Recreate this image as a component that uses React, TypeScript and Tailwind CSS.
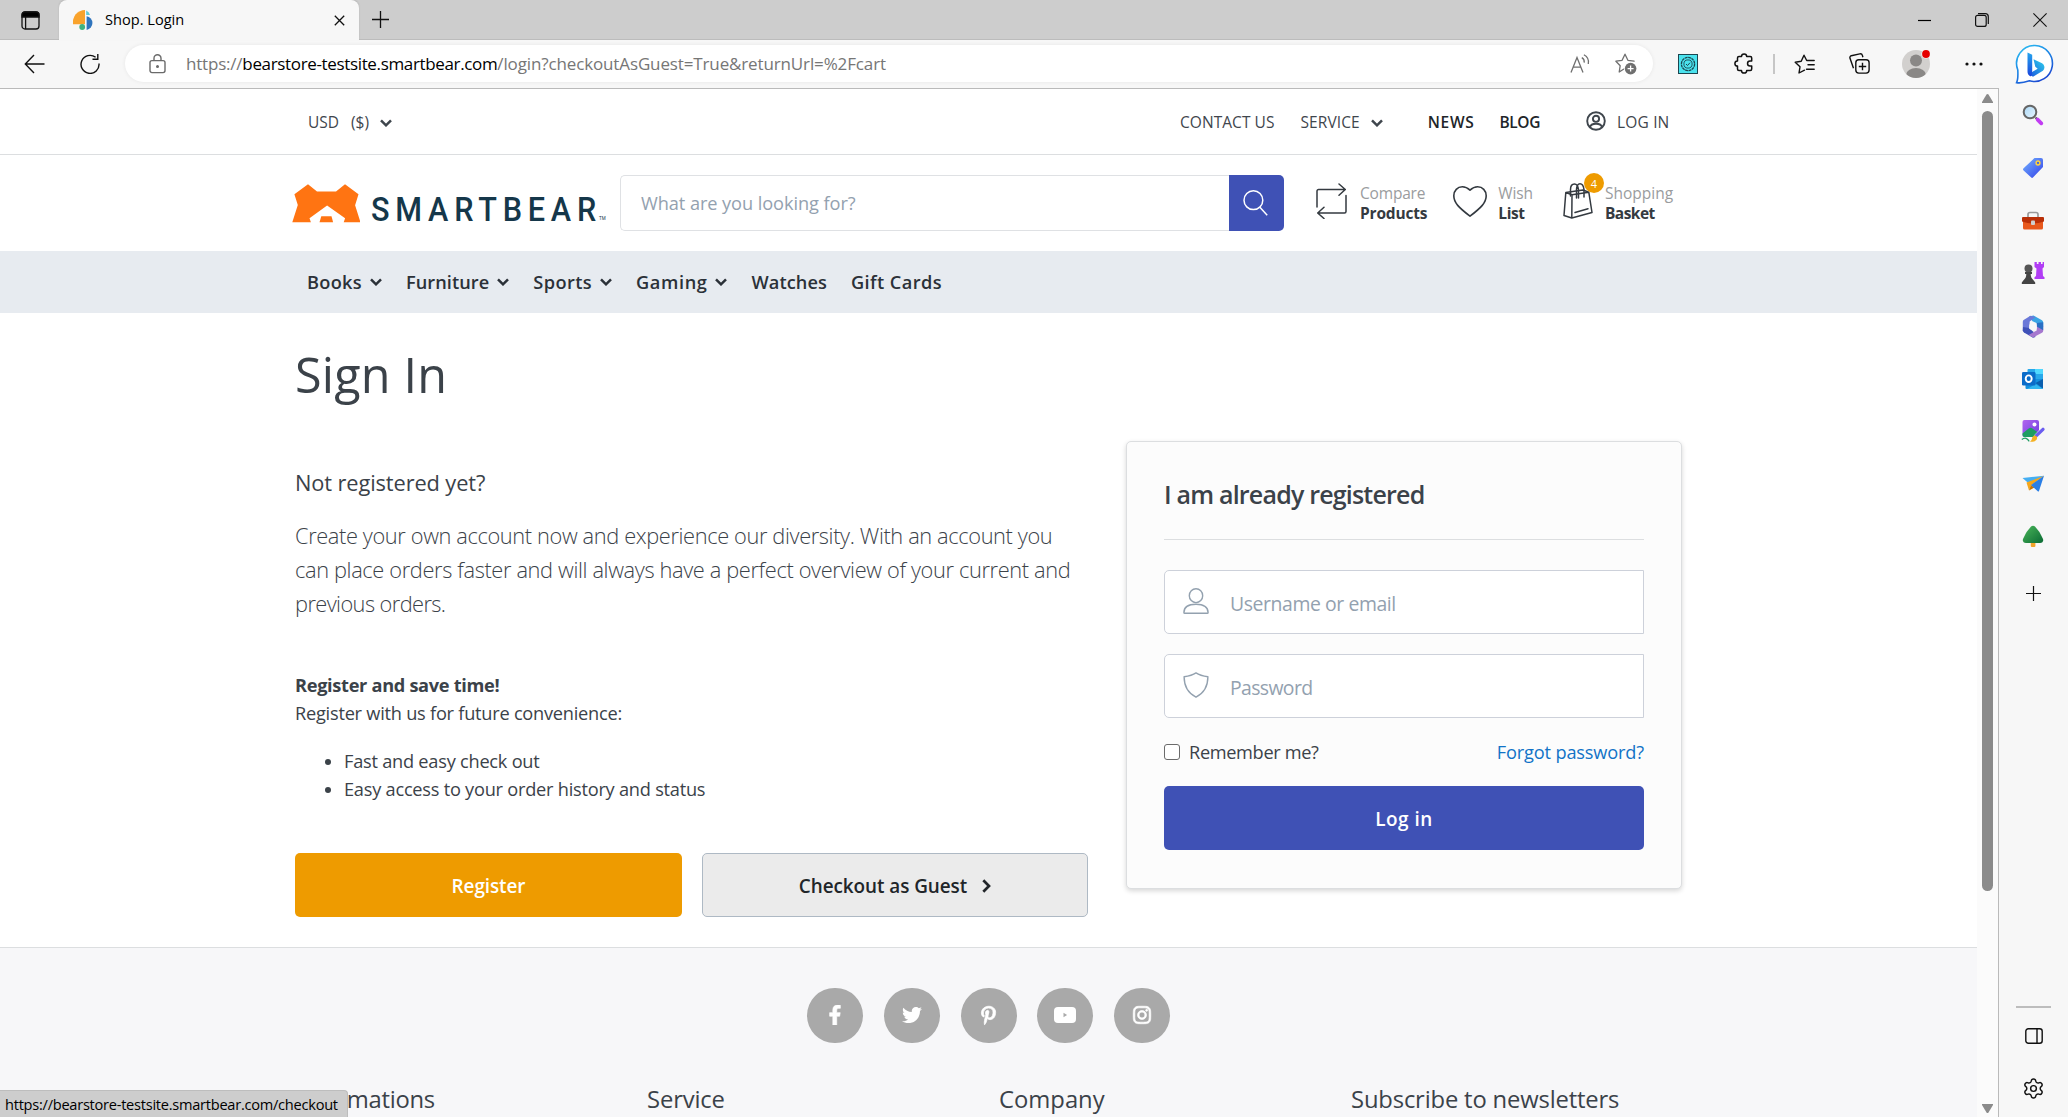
import React from "react";
import type { ReactNode } from "react";
import { FaFacebookF, FaInstagram, FaPinterestP, FaTwitter } from "react-icons/fa";
import { Settings } from "lucide-react";

/* ---------- browser chrome ---------- */

function TitleBar() {
  return (
    <div className="flex h-10 bg-[#cdcdcd] shadow-[inset_0_-1px_0_#bcbcbc]">
      <div className="flex w-[59px] items-center pl-[21px]">
        <svg width="19" height="19" viewBox="0 0 19 19" fill="none" stroke="#111" strokeWidth="1.3">
          <rect x="1" y="1" width="17" height="17" rx="3" />
          <path d="M1 4a3 3 0 0 1 3-3h11a3 3 0 0 1 3 3v2H1z" fill="#000" />
          <path d="M4.6 6v12" />
        </svg>
      </div>
      <div className="flex w-[300px] items-center rounded-t-lg bg-[#f7f7f7] pl-[14px] pr-[14px] shadow-[0_-1px_2px_rgba(0,0,0,0.12)]">
        <svg width="20" height="20" viewBox="0 0 20 20">
          <path d="M12 0v14.2H0A12.3 12.3 0 0 1 12 0z" fill="#f9a32c" />
          <path d="M13.2.6A7 7 0 0 1 17 5h-3.8z" fill="#62c9d6" />
          <path d="M13.6 6.2A7 7 0 0 1 13.6 20z" fill="#2f74bd" />
          <circle cx="9.2" cy="17" r="2.9" fill="#3fb27f" />
        </svg>
        <span className="mb-[2px] ml-3 grow text-[14.6px] leading-none text-black">Shop. Login</span>
        <svg width="11" height="11" viewBox="0 0 11 11" stroke="#111" strokeWidth="1.3">
          <path d="M.8.8l9.4 9.4M10.2.8L.8 10.2" />
        </svg>
      </div>
      <div className="flex grow items-center pb-px pl-[13px]">
        <svg width="17" height="17" viewBox="0 0 17 17" stroke="#111" strokeWidth="1.3">
          <path d="M8.5 0v17M0 8.5h17" />
        </svg>
      </div>
      <div className="flex items-center gap-[44px] pb-px pr-[21px]">
        <svg width="13" height="14" viewBox="0 0 13 14" stroke="#000" strokeWidth="1.2">
          <path d="M0 7.500h13" />
        </svg>
        <svg width="14" height="14" viewBox="0 0 14 14" fill="none" stroke="#111" strokeWidth="1.2">
          <rect x=".6" y="2.4" width="10.6" height="11" rx="2" />
          <path d="M3 .7h7.3a3 3 0 0 1 3 3v7.4" />
        </svg>
        <svg width="14" height="14" viewBox="0 0 14 14" stroke="#111" strokeWidth="1.1">
          <path d="M.4.4l13.2 13.2M13.6.4L.4 13.6" />
        </svg>
      </div>
    </div>
  );
}

function AddressBar() {
  return (
    <div className="ml-6 flex h-[37px] w-[1528px] items-center rounded-full bg-white pl-6 pr-4 shadow-[0_0_4px_rgba(0,0,0,0.07)]">
      <svg width="17" height="20" viewBox="0 0 17 20" fill="none" stroke="#6a6a6a" strokeWidth="1.4">
        <rect x="1" y="6.6" width="15" height="12" rx="2" />
        <path d="M5 6.6V4.3a3.5 3.5 0 0 1 7 0v2.3" />
        <circle cx="8.5" cy="12.5" r=".8" fill="#6a6a6a" />
      </svg>
      <div className="ml-5 grow whitespace-nowrap text-[17px] leading-none text-[#767676]">
        <span className="tracking-[-0.012em]">https://</span>
        <span className="tracking-[-0.0205em] text-black">bearstore-testsite.smartbear.com</span>
        <span className="tracking-[-0.0078em]">/login?checkoutAsGuest=True&amp;returnUrl=%2Fcart</span>
      </div>
      <svg width="21" height="20" viewBox="0 0 21 20" fill="none" stroke="#6f6f6f" strokeWidth="1.3">
        <path d="M1 18.5L7 3.5l6 15M3.2 13.2h7.6" />
        <path d="M11.8 3.6a5 5 0 0 1 2.4 5M13.9.8a8.6 8.6 0 0 1 4.4 9.2" />
      </svg>
      <svg className="ml-6" width="22" height="22" viewBox="0 0 22 22" fill="none" stroke="#6f6f6f" strokeWidth="1.3">
        <path d="M8.5 16.2L4.2 19l1-6.3L.9 8.2l6.2-.9L10 1.2l2.9 6.1 6.2.9" strokeLinejoin="round" strokeLinecap="round" />
        <circle cx="15.6" cy="15.6" r="5.8" fill="#6f6f6f" stroke="none" />
        <path d="M15.6 12.6v6M12.6 15.6h6" stroke="#fff" />
      </svg>
    </div>
  );
}

function Toolbar() {
  return (
    <div className="flex h-12 items-center pb-px pl-6">
      <svg width="21" height="20" viewBox="0 0 21 20" fill="none" stroke="#111" strokeWidth="1.4">
        <path d="M20.500 10H1.500M10 1L1.300 10l8.700 9" />
      </svg>
      <svg className="ml-[34px]" width="22" height="21" viewBox="0 0 22 21" fill="none" stroke="#111" strokeWidth="1.4">
        <path d="M16.600 4.300A9 9 0 1 0 20 10.500M18.800 1v5.300h-5.300" />
      </svg>
      <AddressBar />
      <svg className="ml-[25px]" width="20" height="20" viewBox="0 0 20 20" fill="none" stroke="#1c4650">
        <rect x=".5" y=".5" width="19" height="19" fill="#4be3ee" />
        <circle cx="10" cy="10" r="6.600" strokeWidth="1.300" strokeDasharray="2.900 .55" />
        <circle cx="10" cy="10" r="4.100" strokeWidth=".9" />
        <path d="M8 10l1.500 1.500L12 8.700" />
      </svg>
      <svg className="ml-[36px]" width="19" height="21" viewBox="0 0 19 21" fill="none" stroke="#111" strokeWidth="1.500" strokeLinejoin="round">
        <path d="M7.500 3.500a2.600 2.600 0 0 1 5.200 0h3.500a1.500 1.500 0 0 1 1.500 1.500v3h-1.700a2.400 2.400 0 0 0 0 4.900h1.700V16a1.500 1.500 0 0 1-1.500 1.500h-3.500a2.600 2.600 0 0 1-5.200 0H5A1.500 1.500 0 0 1 3.500 16v-2.900a2.600 2.600 0 0 1 0-5.200V5A1.500 1.500 0 0 1 5 3.500z" />
      </svg>
      <div className="ml-5 h-5 w-[1.500px] bg-[#c6c6c6]" />
      <svg className="ml-[19px]" width="21" height="20" viewBox="0 0 21 20" fill="none" stroke="#111" strokeWidth="1.400" strokeLinejoin="round" strokeLinecap="round">
        <path d="M10.500 16.200L5 19l1-6.200L1.200 8.200l6-.9L10 1.200l2.700 5.300h7.500M14 10.800h6.200M12.500 15.200h7.700" />
      </svg>
      <svg className="ml-[34px]" width="21" height="21" viewBox="0 0 21 21" fill="none" stroke="#111" strokeWidth="1.400">
        <rect x="6.800" y="6.800" width="13.300" height="13.300" rx="3" />
        <path d="M13.500 9.800v7.400M9.800 13.500h7.400" />
        <path d="M4.500 15.300L1 5.300a2 2 0 0 1 1.300-2.600L10.800.9a2.200 2.200 0 0 1 2.600 1.500l.5 1.800" />
      </svg>
      <svg className="ml-8" width="28" height="28" viewBox="0 0 28 28">
        <defs>
          <clipPath id="avatar"><circle cx="14" cy="14" r="14" /></clipPath>
        </defs>
        <g clipPath="url(#avatar)">
          <rect width="28" height="28" fill="#d2d0ce" />
          <circle cx="14" cy="10.500" r="6" fill="#8a8886" />
          <ellipse cx="14" cy="24.500" rx="9.800" ry="6.500" fill="#8a8886" />
        </g>
        <circle cx="24" cy="4" r="4.600" fill="#f7f7f7" />
        <circle cx="24" cy="4" r="3.900" fill="#e60000" />
      </svg>
      <svg className="ml-[35px]" width="18" height="4" viewBox="0 0 18 4" fill="#111">
        <circle cx="2" cy="2" r="1.600" /><circle cx="9" cy="2" r="1.600" /><circle cx="16" cy="2" r="1.600" />
      </svg>
      <svg className="ml-8" width="39" height="40" viewBox="0 0 39 40">
        <defs>
          <linearGradient id="bingRing" x1="0" y1="0" x2=".6" y2="1">
            <stop offset="0" stopColor="#2fc3f2" /><stop offset=".5" stopColor="#1d8ae6" /><stop offset="1" stopColor="#1b49d2" />
          </linearGradient>
          <linearGradient id="bingStem" x1="0" y1="0" x2="0" y2="1">
            <stop offset="0" stopColor="#25a5ee" /><stop offset="1" stopColor="#1a45dc" />
          </linearGradient>
          <linearGradient id="bingBowl" x1="0" y1="1" x2="1" y2="0">
            <stop offset="0" stopColor="#1a52dd" /><stop offset="1" stopColor="#2fd3ec" />
          </linearGradient>
        </defs>
        <path d="M20 1.500a18 18 0 1 1-5.500 35.300C11 38 5 39.300 1.600 38.700 3.200 35.500 3 30 2.800 26A18 18 0 0 1 20 1.500z" fill="#fff" stroke="url(#bingRing)" strokeWidth="1.600" />
        <path d="M18.500 15.300l8.600 3.900a4.800 4.800 0 0 1 .8 7.600L18 32.800l-4.300-2.800 9-5.300-2.400-1.900z" fill="url(#bingBowl)" />
        <path d="M12.500 8.500l4.700 2.200v17c0 4-1 5.300-2.400 4.200-1.700-1-2.300-2.600-2.300-4.700z" fill="url(#bingStem)" />
      </svg>
    </div>
  );
}

function SidebarCell({ children }: { children: ReactNode }) {
  return <div className="flex h-[52.700px] items-center justify-center">{children}</div>;
}

function Sidebar() {
  return (
    <div className="flex w-[69px] flex-col pr-px pt-px">
      <SidebarCell>
        <svg width="22" height="22" viewBox="0 0 22 22">
          <defs><linearGradient id="lens" x1="0" y1="0" x2="1" y2="1"><stop offset="0" stopColor="#a9d6f5" /><stop offset="1" stopColor="#e9f7ff" /></linearGradient></defs>
          <path d="M13.500 13.500l2.500 2.500" stroke="#555" strokeWidth="2" />
          <circle cx="8" cy="8" r="6.300" fill="url(#lens)" stroke="#666" strokeWidth="2" />
          <path d="M15.600 15.600l3.700 3.700" stroke="#c13df2" strokeWidth="3.800" strokeLinecap="round" />
        </svg>
      </SidebarCell>
      <SidebarCell>
        <svg width="22" height="22" viewBox="0 0 22 22">
          <defs><linearGradient id="tag" x1="0" y1="0" x2="1" y2="1"><stop offset="0" stopColor="#74b4ff" /><stop offset="1" stopColor="#3340e8" /></linearGradient></defs>
          <path d="M12.500 1H19a2 2 0 0 1 2 2v7l-9.800 10.300a1.500 1.500 0 0 1-2.200 0L1.600 13.500a1.500 1.500 0 0 1 0-2.200z" fill="url(#tag)" />
          <circle cx="16" cy="6" r="1.900" fill="#3f66e8" stroke="#ffd23d" strokeWidth="1.500" />
        </svg>
      </SidebarCell>
      <SidebarCell>
        <svg width="24" height="20" viewBox="0 0 24 20">
          <path d="M7 6V3.500A2 2 0 0 1 9 1.500h6a2 2 0 0 1 2 2V6" fill="none" stroke="#9a9a9a" strokeWidth="1.700" />
          <rect x="2" y="6" width="20" height="12.500" rx="1.500" fill="#e8581c" />
          <path d="M2 6h20a1 1 0 0 1 1 1v3.500q-11 4-22 0V7a1 1 0 0 1 1-1z" fill="#b92f07" />
          <rect x="10" y="9.500" width="4" height="4.600" rx="1" fill="#cfcfcf" />
        </svg>
      </SidebarCell>
      <SidebarCell>
        <svg width="24" height="24" viewBox="0 0 24 24">
          <path d="M13.500 1h2.300v2h1.700V1h2.500v2h1.600V1H23v5l-1.500 1.500.5 7.500 1.500 1.300V18h-10v-1.700l1.500-1.300.5-7.500L13.500 6z" fill="#b13df5" />
          <circle cx="7.500" cy="7.500" r="4" fill="#555" />
          <path d="M4 11h7v2H9.700c0 3 1 4.500 3 6.500l1.500 2V23H.8v-1.500l1.500-2c2-2 3-3.500 3-6.500H4z" fill="#444" />
        </svg>
      </SidebarCell>
      <SidebarCell>
        <svg width="22" height="23" viewBox="0 0 22 23">
          <path d="M7 1.500L11.500.5 20 5.300q1.200.8 1.200 2v4.500L14.500 8l-4-1.700z" fill="#3aa5e4" />
          <path d="M8.500.8l5 1.300-5.800 4.400L7 15l-3.500 2.500L.8 15.700V6.800q0-1.300 1.200-2z" fill="#6b78d8" />
          <path d="M1 12l6 1 4 3.500 2.500 5.500-2.500.8-9-5.300q-1.200-.8-1.200-2z" fill="#3f51b8" />
          <path d="M21.200 11v4.700q0 1.300-1.200 2L11 22.600 6.500 20l8.200-4.500.3-7z" fill="#a678cf" />
          <path d="M21.200 7.300v8l-6.500-3.700V8z" fill="#2a6fc4" />
          <path d="M11 7.600l3.700 2v4L11 15.700l-3.700-2v-4z" fill="#f7f7f7" />
        </svg>
      </SidebarCell>
      <SidebarCell>
        <svg width="22" height="22" viewBox="0 0 22 22">
          <path d="M6.500 1H20a1 1 0 0 1 1 1v9H5.500V2a1 1 0 0 1 1-1z" fill="#28a8ea" />
          <path d="M13 1h7a1 1 0 0 1 1 1v4h-8z" fill="#50d9ff" />
          <path d="M3.500 11H21v9a1 1 0 0 1-1 1H4.500a1 1 0 0 1-1-1z" fill="#1490df" />
          <path d="M21 11v9.500L13.500 15z" fill="#0a5fae" />
          <path d="M5 21l8.500-5 7.500 5z" fill="#32b6f0" />
          <rect x="0" y="4" width="13.500" height="13.500" rx="1.300" fill="#0b6cc9" />
          <ellipse cx="6.700" cy="10.700" rx="3" ry="3.300" fill="none" stroke="#fff" strokeWidth="1.900" />
        </svg>
      </SidebarCell>
      <SidebarCell>
        <svg width="24" height="24" viewBox="0 0 24 24">
          <defs><linearGradient id="pic" x1="0" y1="0" x2="1" y2="1"><stop offset="0" stopColor="#b266ee" /><stop offset="1" stopColor="#6c3fe0" /></linearGradient></defs>
          <rect x="1.500" y="1" width="16.500" height="17" rx="2" fill="url(#pic)" />
          <path d="M1.500 14.500L8 9.200q1.500-1 3 0l7 5V16a2 2 0 0 1-2 2H3.500a2 2 0 0 1-2-2z" fill="#1f9d61" />
          <circle cx="13.500" cy="5.500" r="2" fill="#fff" />
          <path d="M23 9.500L15 18" stroke="#f7f7f7" strokeWidth="5" />
          <path d="M22 10.300L15.500 16.500" stroke="#6b5df0" strokeWidth="3.200" strokeLinecap="round" />
          <path d="M11.500 18q2-2.500 4-.8 1.500 2-.5 4-2 2-6 1.500 2-1.500 2.500-4.700z" fill="#f5b121" />
          <path d="M.8 20.500q3-2.300 5-.8T8 22.300" fill="none" stroke="#1f9d61" strokeWidth="1.400" />
        </svg>
      </SidebarCell>
      <SidebarCell>
        <svg width="23" height="18" viewBox="0 0 23 18">
          <path d="M.5 3L22 .8 8 9.500z" fill="#45aef2" />
          <path d="M22 .8L4.500 7.500 7 15.500l2-5z" fill="#f6a71c" />
          <path d="M7 15.500l2-5.500 3.500 2.500z" fill="#c87400" />
          <path d="M22 .8L9 10l7 6.500q.8.300 1-.5z" fill="#2a7fe6" />
        </svg>
      </SidebarCell>
      <SidebarCell>
        <svg width="22" height="23" viewBox="0 0 22 23">
          <defs><linearGradient id="tree" x1="0" y1="0" x2="1" y2="1"><stop offset="0" stopColor="#4bb75a" /><stop offset="1" stopColor="#0b6b34" /></linearGradient></defs>
          <rect x="8.800" y="17" width="4.600" height="5" rx="1" fill="#f0a52b" />
          <path d="M9 1.600q2-1.800 4 0Q18 6.500 21 14q.8 3.500-3 4H4q-3.800-.5-3-4Q4 6.500 9 1.600z" fill="url(#tree)" />
        </svg>
      </SidebarCell>
      <div className="flex h-[61px] items-center justify-center">
        <svg width="15" height="15" viewBox="0 0 15 15" stroke="#111" strokeWidth="1.200"><path d="M7.500 0v15M0 7.500h15" /></svg>
      </div>
      <div className="mt-auto flex h-[111px] flex-col items-center">
        <div className="h-[2px] w-[35px] bg-[#bdbdbd]" />
        <svg className="ml-px mt-[20px] shrink-0" width="18" height="16" viewBox="0 0 18 16" fill="none" stroke="#111" strokeWidth="1.400">
          <rect x=".8" y=".8" width="16.400" height="14.400" rx="2.500" />
          <path d="M12 1v14" />
        </svg>
        <Settings className="ml-px mt-[33px] size-[23px] shrink-0 text-[#111]" strokeWidth={1.5} />
      </div>
    </div>
  );
}

function ScrollBar() {
  return (
    <div className="flex w-[21px] flex-col items-center bg-[#fbfbfb] pt-[5px]">
      <svg width="11" height="9" viewBox="0 0 11 9"><path d="M5.500 0q.6 0 1 .6L11 8v1H0V8L4.500.6q.4-.6 1-.6z" fill="#8b8b8b" /></svg>
      <div className="mt-2 h-[780px] w-[11px] rounded-full bg-[#8b8b8b]" />
      <svg className="mb-1 mt-auto" width="11" height="9" viewBox="0 0 11 9"><path d="M5.500 9q-.6 0-1-.6L0 1V0h11v1L6.500 8.400q-.4.600-1 .6z" fill="#8b8b8b" /></svg>
    </div>
  );
}

/* ---------- shop page ---------- */

function Caret({ className }: { className: string }) {
  return (
    <svg className={className} width="12" height="8" viewBox="0 0 12 8" fill="none" stroke="currentColor" strokeWidth="2.5">
      <path d="M1 1.300l5 5 5-5" />
    </svg>
  );
}

function TopMenu() {
  return (
    <div className="flex h-[66px] items-center border-b border-[#dcdee0] pl-[308px] pt-[2px] text-[15.500px] leading-none text-[#3f464d]">
      <span>USD</span>
      <span className="ml-3">($)</span>
      <Caret className="ml-[11px]" />
      <span className="ml-[788px] tracking-[0.003em]">CONTACT US</span>
      <span className="ml-[26px] tracking-[0.006em]">SERVICE</span>
      <Caret className="ml-[11px]" />
      <span className="ml-[45px] font-semibold tracking-[0.044em] text-[#212529]">NEWS</span>
      <span className="ml-[25px] font-semibold tracking-[-0.024em] text-[#212529]">BLOG</span>
      <svg className="-mt-1 ml-[46px]" width="20" height="20" viewBox="0 0 20 20" fill="none" stroke="#3f464d" strokeWidth="1.900">
        <circle cx="10" cy="10" r="8.800" />
        <circle cx="10" cy="7.800" r="3.100" />
        <path d="M4 16.300c.5-2.600 2.300-3.500 6-3.500s5.500.9 6 3.500" />
      </svg>
      <span className="ml-[11px] tracking-[0.010em]">LOG IN</span>
    </div>
  );
}

function Logo() {
  return (
    <div className="flex h-10 w-[315px] items-end">
      <svg width="68" height="40" viewBox="0 0 68 40">
        <path d="M.3 39.200L5.800 22 2.400 11.200 16 1.200 25 8.400h19L53 1.200l13.500 10-3.400 11 5.400 17H51.700l1.400-4-18-12.600-17.600 12.600 1.400 4z" fill="#ff7412" />
        <path d="M29.300 33.300h10.200l1.600 5.900H27.500z" fill="#ff7412" />
      </svg>
      <span className="-mb-[3px] ml-[11px] w-[228px] origin-left scale-x-[0.9] font-['Roboto'] text-[34px] font-medium leading-[34px] tracking-[0.189em] text-[#15374a]">
        SMARTBEAR
      </span>
      <span className="mb-px font-['Roboto'] text-[4.500px] leading-[6px] text-[#15374a]">TM</span>
    </div>
  );
}

function HeaderTool({ icon, top, bottom, className }: { icon: ReactNode; top: ReactNode; bottom: ReactNode; className: string }) {
  return (
    <div className={"flex items-center " + className}>
      {icon}
      <div className="text-[15.500px] leading-[20px]">
        <div className="text-[#9a9c9e]">{top}</div>
        <div className="font-bold text-[#343a40]">{bottom}</div>
      </div>
    </div>
  );
}

function Header() {
  return (
    <div className="flex h-24 items-center pl-[292px]">
      <Logo />
      <div className="ml-[13px] flex h-14 w-[664px]">
        <div className="flex grow items-center rounded-l-[5px] border border-r-0 border-[#dfe1e4] pl-5 text-[18.200px] leading-none tracking-[-0.004em] text-[#93a1af]">
          What are you looking for?
        </div>
        <div className="flex w-[55px] items-center justify-center rounded-r-[5px] bg-[#3f51b5] pr-[3px]">
          <svg width="25" height="26" viewBox="0 0 25 26" fill="none" stroke="#fff" strokeWidth="1.500">
            <circle cx="10.400" cy="10.200" r="9.400" /><path d="M16.900 17.200l7.300 8" />
          </svg>
        </div>
      </div>
      <HeaderTool
        className="ml-8"
        icon={
          <svg className="-mt-1 mr-[13px]" width="31" height="36" viewBox="0 0 31 36" fill="none" stroke="#343a40" strokeWidth="1.500" strokeLinecap="round" strokeLinejoin="round">
            <path d="M1 24V8a1.500 1.500 0 0 1 1.500-1.500H29M23 1l6.300 5.500L23 12.300M30 12.500v16a1.500 1.500 0 0 1-1.500 1.500H2M8 24.300L1.700 30 8 35.500" />
          </svg>
        }
        top={<span className="tracking-[-0.012em]">Compare</span>}
        bottom={<span className="tracking-[-0.012em]">Products</span>}
      />
      <HeaderTool
        className="ml-[26px]"
        icon={
          <svg className="-mt-1 mr-[11px]" width="34" height="31" viewBox="0 0 34 31" fill="none" stroke="#343a40" strokeWidth="1.600" strokeLinejoin="round">
            <path d="M17 4.200C14.500 1.800 12 .8 9.300.8 4.500.8.800 4.600.800 9.800c0 7 5 11.700 16.200 20.400C28.200 21.500 33.200 16.800 33.200 9.800c0-5.200-3.700-9-8.500-9-2.700 0-5.200 1-7.700 3.400z" />
          </svg>
        }
        top={<span className="tracking-[-0.007em]">Wish</span>}
        bottom={<span className="tracking-[-0.025em]">List</span>}
      />
      <HeaderTool
        className="ml-[30px]"
        icon={
          <div className="relative -mt-1 mr-3">
            <svg width="30" height="36" viewBox="0 0 30 36" fill="none" stroke="#343a40" strokeWidth="1.500" strokeLinejoin="round" strokeLinecap="round">
              <path d="M2.800 9.500L20 7l5.800 2.200L29 29.500 8.800 35 1 32.500zM2.800 9.500L9 11.800 8.800 35M9 11.800l16.800-2.600M12 29.500l13-3.700" />
              <path d="M7.500 13V6.500C7.500 3 9 1 11.500 1S15 3 15.500 6.500V15M13.500 15V6.500C13.500 3 15 .8 17 .8S20.500 3 21 6.500V14" />
            </svg>
            <span className="absolute -top-[10px] left-[21px] flex size-5 items-center justify-center rounded-full bg-[#ee9b00] text-[11px] leading-none text-white">4</span>
          </div>
        }
        top="Shopping"
        bottom={<span className="tracking-[-0.034em]">Basket</span>}
      />
    </div>
  );
}

function Nav() {
  return (
    <div className="flex h-[62px] items-center bg-[#e7ebf0] pl-[307px] text-[18.200px] font-semibold leading-none text-[#2b3138]">
      <span className="tracking-[0.016em]">Books</span>
      <Caret className="ml-[8px]" />
      <span className="ml-[24px] tracking-[0.003em]">Furniture</span>
      <Caret className="ml-[8px]" />
      <span className="ml-[24px] tracking-[0.023em]">Sports</span>
      <Caret className="ml-[8px]" />
      <span className="ml-[24px] tracking-[0.033em]">Gaming</span>
      <Caret className="ml-[8px]" />
      <span className="ml-[24px] tracking-[0.005em]">Watches</span>
      <span className="ml-[24px] tracking-[0.023em]">Gift Cards</span>
    </div>
  );
}

function RegisterColumn() {
  return (
    <div className="w-[793px] pt-[27px]">
      <h2 className="text-[21.800px] leading-[30px] tracking-[-0.005em]">Not registered yet?</h2>
      <p className="mt-[21px] whitespace-nowrap text-[21.800px] font-light leading-[34px] tracking-[-0.0172em]">
        Create your own account now and experience our diversity. With an account you
        <br />
        <span className="tracking-[-0.0165em]">can place orders faster and will always have a perfect overview of your current and</span>
        <br />
        <span className="tracking-[-0.027em]">previous orders.</span>
      </p>
      <div className="mt-[50px] text-[18.200px] leading-7 tracking-[-0.013em]">
        <div className="font-bold tracking-[-0.017em]">Register and save time!</div>
        <div>Register with us for future convenience:</div>
        <ul className="mt-5 list-disc pl-[49px]">
          <li>Fast and easy check out</li>
          <li>Easy access to your order history and status</li>
        </ul>
      </div>
      <div className="mt-[50px] flex gap-5 text-[18.900px] font-semibold leading-none">
        <button className="h-16 w-[387px] rounded-[5px] bg-[#ee9b00] pt-[2px] tracking-[-0.004em] text-white">Register</button>
        <button className="flex h-16 w-[386px] items-center justify-center gap-[15px] rounded-[5px] border border-[#aeb9c4] bg-[#ebebeb] pt-[2px] tracking-[-0.003em] text-[#212529]">
          Checkout as Guest
          <svg width="9" height="14" viewBox="0 0 9 14" fill="none" stroke="currentColor" strokeWidth="2.700">
            <path d="M1.300 1.300L7 7l-5.700 5.700" />
          </svg>
        </button>
      </div>
    </div>
  );
}

function LoginCard() {
  return (
    <div className="ml-[38px] h-[448px] w-[556px] rounded-[5px] border border-[#dcdee0] bg-[#fcfcfc] px-[37px] pt-[35px] shadow-[0_2px_5px_rgba(0,0,0,0.16)]">
      <h2 className="text-[25px] font-semibold leading-[34px] tracking-[-0.032em]">I am already registered</h2>
      <div className="mt-7 h-px bg-[#dcdee0]" />
      <div className="mt-[30px] flex h-16 items-center rounded-l-[5px] border border-[#cdd1da] bg-white pl-[18px]">
        <svg className="-mt-[2px] mr-[21px]" width="26" height="26" viewBox="0 0 26 26" fill="none" stroke="#93a1af" strokeWidth="1.400">
          <ellipse cx="13" cy="7.700" rx="6.700" ry="6.900" />
          <path d="M.9 24.500c0-5.500 4.500-8.300 12.100-8.300s12.100 2.800 12.100 8.300q0 .8-.8.800H1.700q-.8 0-.8-.8z" />
        </svg>
        <span className="pt-[3px] text-[19.400px] leading-none tracking-[-0.021em] text-[#93a1af]">Username or email</span>
      </div>
      <div className="mt-5 flex h-16 items-center rounded-l-[5px] border border-[#cdd1da] bg-white pl-[18px]">
        <svg className="-mt-[2px] mr-[21px]" width="26" height="26" viewBox="0 0 26 26" fill="none" stroke="#93a1af" strokeWidth="1.400" strokeLinejoin="round">
          <path d="M13 .9c3 2 7 3.200 11.900 3.900 0 9.500-3.900 16.300-11.900 20.400C5 21.100 1.100 14.300 1.100 4.800 6 4.100 10 2.900 13 .9z" />
        </svg>
        <span className="pt-[3px] text-[19.400px] leading-none tracking-[-0.032em] text-[#93a1af]">Password</span>
      </div>
      <div className="mt-5 flex h-7 items-center text-[18.200px] leading-none">
        <span className="size-4 rounded-[3px] border border-[#6b6b6b] bg-white" />
        <span className="ml-[9px] grow tracking-[-0.019em]">Remember me?</span>
        <span className="tracking-[-0.009em] text-[#1173c7]">Forgot password?</span>
      </div>
      <button className="mt-5 h-16 w-full rounded-[5px] bg-[#3f51b5] pt-[2px] text-[18.900px] font-semibold leading-none tracking-[0.026em] text-white">Log in</button>
    </div>
  );
}

const SOCIAL = [
  { name: "Facebook", icon: <FaFacebookF className="size-5 stroke-white" strokeWidth={16} /> },
  { name: "Twitter", icon: <FaTwitter className="size-5" /> },
  { name: "Pinterest", icon: <FaPinterestP className="size-[19px] overflow-visible stroke-white" strokeWidth={20} /> },
  {
    name: "YouTube",
    icon: (
      <svg width="22" height="16" viewBox="0 0 22 16">
        <rect width="22" height="16" rx="4" fill="#fff" />
        <path d="M9.500 5.800v4.400l3.600-2.200z" fill="#a9a9a9" />
      </svg>
    ),
  },
  { name: "Instagram", icon: <FaInstagram className="size-[20px] stroke-white" strokeWidth={18} /> },
];

function Footer() {
  return (
    <div className="h-[170px] overflow-hidden border-t border-[#dcdee0] bg-[#f7f7f9]">
      <div className="ml-[807px] mt-10 flex gap-[20.750px]">
        {SOCIAL.map((s) => (
          <div key={s.name} title={s.name} className="flex h-[55px] w-14 items-center justify-center rounded-full bg-[#a9a9a9] pb-px text-white">
            {s.icon}
          </div>
        ))}
      </div>
      <div className="ml-[295px] mt-[40.500px] grid grid-cols-[repeat(4,352px)] whitespace-nowrap text-[23.800px] leading-[30px]">
        <div className="tracking-[-0.012em]">Informations</div>
        <div className="tracking-[-0.006em]">Service</div>
        <div>Company</div>
        <div className="tracking-[-0.007em]">Subscribe to newsletters</div>
      </div>
    </div>
  );
}

export default function App() {
  return (
    <div className="relative flex h-[1117px] w-[2068px] flex-col overflow-hidden bg-[#f7f7f7] font-['Open_Sans',sans-serif]">
      <TitleBar />
      <Toolbar />
      <div className="flex grow">
        <div className="flex w-[1999px] border-r border-t border-[#bababa] bg-white">
          <div className="flex w-[1977px] flex-col whitespace-nowrap text-[#3b4249]">
            <TopMenu />
            <Header />
            <Nav />
            <div className="h-[634px] pl-[295px] pt-[31px]">
              <h1 className="text-[48.500px] leading-[60px] tracking-[0.004em]">Sign In</h1>
              <div className="mt-[37px] flex items-start">
                <RegisterColumn />
                <LoginCard />
              </div>
            </div>
            <Footer />
          </div>
          <ScrollBar />
        </div>
        <Sidebar />
      </div>
      <div className="absolute bottom-0 left-0 flex h-[27px] w-[348px] items-center rounded-tr-[4px] border-r border-t border-[#bdbdbd] bg-[#cdcdcd] pl-[5px] text-[14.600px] leading-none tracking-[-0.0175em] text-black">
        https://bearstore-testsite.smartbear.com/checkout
      </div>
    </div>
  );
}
